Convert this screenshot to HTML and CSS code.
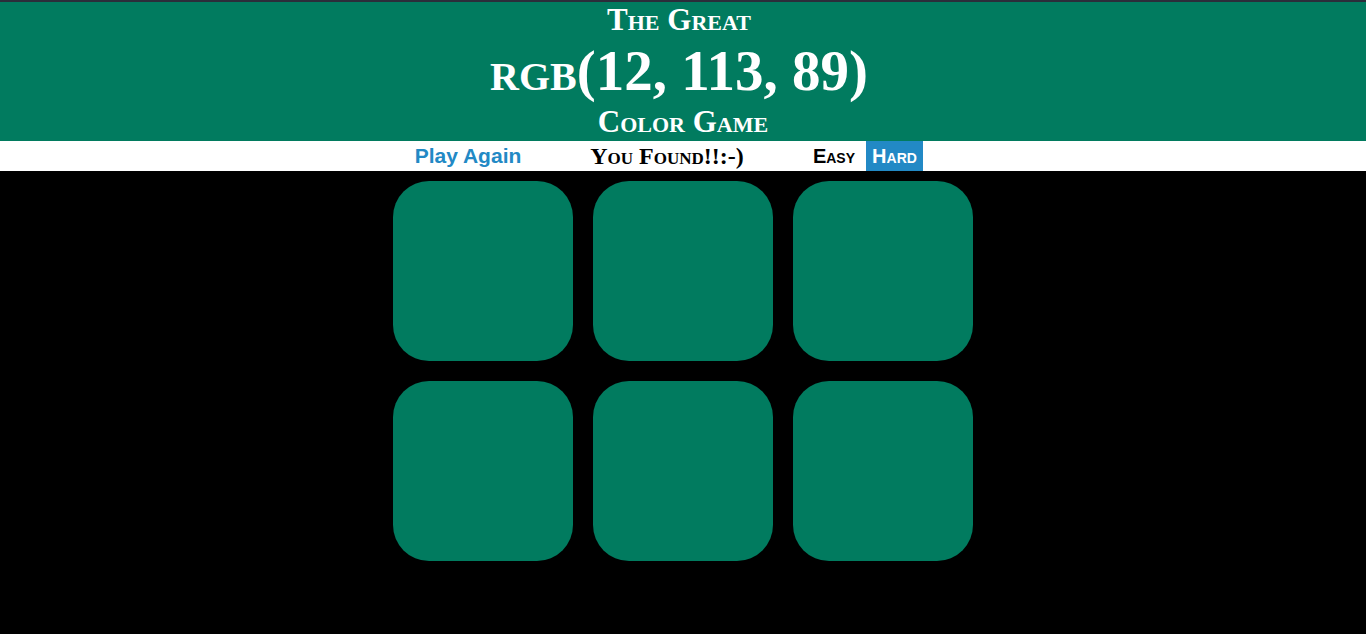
FILE: index.html
```html
<!DOCTYPE html>
<html lang="en">
<head>
<meta charset="utf-8">
<title>Color Game</title>
<link rel="stylesheet" href="styles.css">
</head>
<body>
<header class="header">
  <div class="title-line shifted">The Great</div>
  <div class="title-color shifted">rgb(12, 113, 89)</div>
  <div class="title-line">Color Game</div>
</header>
<nav class="stripe">
  <button class="btn-new">Play Again</button>
  <span class="message">You Found!!:-)</span>
  <button class="mode">Easy</button>
  <button class="mode selected">Hard</button>
</nav>
<main class="board">
  <div class="square"></div>
  <div class="square"></div>
  <div class="square"></div>
  <div class="square"></div>
  <div class="square"></div>
  <div class="square"></div>
</main>
</body>
</html>
```
FILE: styles.css
```css
* { box-sizing: border-box; }
html, body {
  margin: 0;
  padding: 0;
  background: #000;
}
.header {
  background: rgb(1, 123, 95);
  border-top: 2px solid #2b2d3a;
  color: #fff;
  text-align: center;
  font-family: "Liberation Serif", serif;
  font-weight: 700;
  font-variant: small-caps;
  padding-bottom: 1px;
}
.title-line {
  font-size: 31px;
  line-height: 36px;
  height: 36px;
}
.title-color {
  font-size: 57px;
  line-height: 66px;
  height: 66px;
}
.shifted {
  padding-right: 8px;
}
.stripe {
  background: #fff;
  height: 30px;
  display: flex;
  justify-content: center;
  align-items: stretch;
  padding-right: 39px;
}
.stripe button {
  border: none;
  background: none;
  margin: 0;
  padding: 0;
  font-family: "Liberation Sans", sans-serif;
  font-weight: 700;
  font-size: 20px;
  height: 30px;
  cursor: pointer;
}
.stripe .btn-new {
  width: 128px;
  font-size: 21px;
  color: #2289c5;
}
.message {
  width: 270px;
  text-align: center;
  font-family: "Liberation Serif", serif;
  font-weight: 700;
  font-size: 24px;
  font-variant: small-caps;
  line-height: 30px;
  color: #000;
}
.mode {
  font-variant: small-caps;
  color: #000;
}
.mode:not(.selected) { width: 64px; }
.stripe .mode.selected {
  width: 57px;
  background: #2289c5;
  color: #fff;
}
.board {
  width: 600px;
  margin: 0 auto;
  display: flex;
  flex-wrap: wrap;
}
.square {
  width: 180px;
  height: 180px;
  margin: 10px;
  border-radius: 36px;
  background: rgb(1, 123, 95);
}
```
